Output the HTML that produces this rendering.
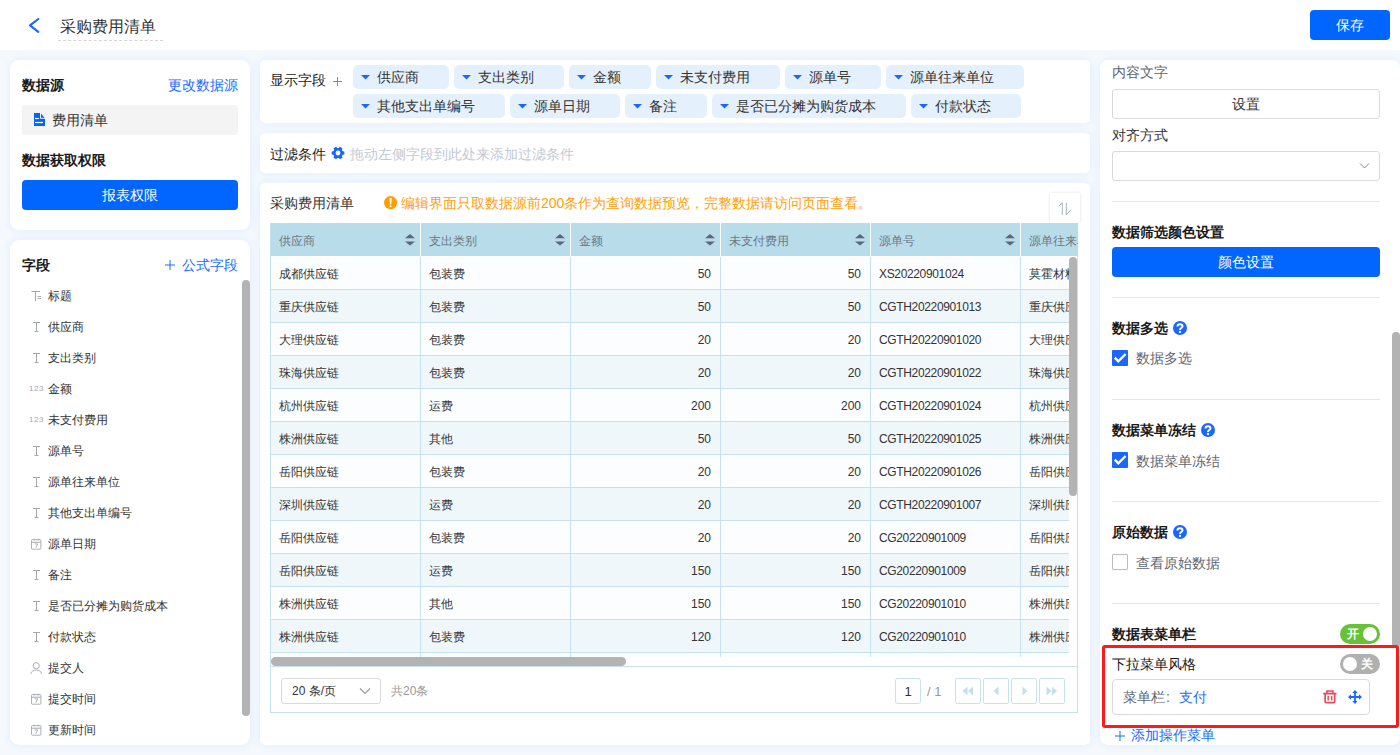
<!DOCTYPE html>
<html><head><meta charset="utf-8">
<style>
html,body{margin:0;padding:0;}
body{width:1400px;height:755px;overflow:hidden;position:relative;background:#f5f9fe;font-family:"Liberation Sans",sans-serif;}
.t{position:absolute;white-space:nowrap;}
.b{position:absolute;box-sizing:border-box;}
.panel{position:absolute;background:#fff;border-radius:10px;box-shadow:0 0 8px 1px #e2eefd;}
svg{position:absolute;overflow:visible;}
</style></head><body>

<div class="b" style="left:0px;top:0px;width:1400px;height:50px;background:#fff;"></div>
<svg style="left:0;top:0" width="60" height="50"><polyline points="38.3,19 30,25.4 38.3,31.8" fill="none" stroke="#1a66ff" stroke-width="2.1" stroke-linecap="round" stroke-linejoin="round"/></svg>
<div class="t" style="left:60px;top:15.5px;font-size:16px;line-height:22px;color:#333;font-weight:normal;">采购费用清单</div>
<div class="b" style="left:58px;top:40px;width:105px;height:1px;border-top:1px dashed #d5d5d5;"></div>
<div class="b" style="left:1310px;top:10px;width:80px;height:30px;background:#0066ff;border-radius:4px;"></div>
<div class="t" style="left:1310px;top:15.0px;font-size:14px;line-height:20px;color:#fff;font-weight:normal;width:80px;text-align:center;">保存</div>
<div class="panel" style="left:10px;top:60px;width:240px;height:170px;border-radius:9px;"></div>
<div class="panel" style="left:10px;top:240px;width:240px;height:505px;border-radius:9px;"></div>
<div class="panel" style="left:260px;top:60px;width:830px;height:63px;border-radius:5px;"></div>
<div class="panel" style="left:260px;top:133px;width:830px;height:40px;border-radius:5px;"></div>
<div class="panel" style="left:260px;top:183px;width:830px;height:562px;border-radius:5px;"></div>
<div class="panel" style="left:1100px;top:60px;width:300px;height:685px;border-radius:8px;"></div>
<div class="t" style="left:22px;top:75.0px;font-size:14px;line-height:20px;color:#1a1a1a;font-weight:bold;">数据源</div>
<div class="t" style="right:1162px;top:75.0px;font-size:14px;line-height:20px;color:#1a6cff;font-weight:normal;">更改数据源</div>
<div class="b" style="left:22px;top:105px;width:216px;height:30px;background:#f4f4f5;border-radius:3px;"></div>
<svg style="left:33px;top:113px" width="13" height="14"><path d="M1 0 H7 V5.8 H12 V13 H1 Z" fill="#0066ff"/><path d="M8 0.6 L11.6 4.8 H8 Z" fill="#0066ff"/><rect x="2" y="4.9" width="3.8" height="1.2" fill="#fff"/><rect x="2" y="8.9" width="8" height="1.2" fill="#fff"/></svg>
<div class="t" style="left:52px;top:110.0px;font-size:14px;line-height:20px;color:#333;font-weight:normal;">费用清单</div>
<div class="t" style="left:22px;top:149.8px;font-size:14px;line-height:20px;color:#1a1a1a;font-weight:bold;">数据获取权限</div>
<div class="b" style="left:22px;top:180px;width:216px;height:30px;background:#0066ff;border-radius:4px;"></div>
<div class="t" style="left:22px;top:185.0px;font-size:14px;line-height:20px;color:#fff;font-weight:normal;width:216px;text-align:center;">报表权限</div>
<div class="t" style="left:22px;top:255.0px;font-size:14px;line-height:20px;color:#1a1a1a;font-weight:bold;">字段</div>
<div class="t" style="right:1162px;top:254.5px;font-size:14px;line-height:20px;color:#1a6cff;font-weight:normal;">公式字段</div>
<svg style="left:165px;top:259.5px" width="10" height="10"><path d="M5 0 V10 M0 5 H10" stroke="#1a6cff" stroke-width="1"/></svg>
<svg style="left:31px;top:289.5px" width="12" height="12"><path d="M0.5 1.5 H9 M4.5 1.5 V11" stroke="#a3a8b0" stroke-width="1" fill="none"/><path d="M6.5 6.5 H10 M6.5 8.5 H10" stroke="#a3a8b0" stroke-width="0.9"/></svg>
<div class="t" style="left:48px;top:286.5px;font-size:12px;line-height:18px;color:#333;font-weight:normal;">标题</div>
<svg style="left:31px;top:320.5px" width="12" height="12"><path d="M2 1.5 H9 M5.5 1.5 V10.5 M3.5 10.5 H7.5" stroke="#a3a8b0" stroke-width="1" fill="none"/></svg>
<div class="t" style="left:48px;top:317.5px;font-size:12px;line-height:18px;color:#333;font-weight:normal;">供应商</div>
<svg style="left:31px;top:351.5px" width="12" height="12"><path d="M2 1.5 H9 M5.5 1.5 V10.5 M3.5 10.5 H7.5" stroke="#a3a8b0" stroke-width="1" fill="none"/></svg>
<div class="t" style="left:48px;top:348.5px;font-size:12px;line-height:18px;color:#333;font-weight:normal;">支出类别</div>
<div class="t" style="left:29px;top:382.5px;font-size:8px;line-height:12px;color:#a3a8b0;letter-spacing:0.6px;">123</div>
<div class="t" style="left:48px;top:379.5px;font-size:12px;line-height:18px;color:#333;font-weight:normal;">金额</div>
<div class="t" style="left:29px;top:413.5px;font-size:8px;line-height:12px;color:#a3a8b0;letter-spacing:0.6px;">123</div>
<div class="t" style="left:48px;top:410.5px;font-size:12px;line-height:18px;color:#333;font-weight:normal;">未支付费用</div>
<svg style="left:31px;top:444.5px" width="12" height="12"><path d="M2 1.5 H9 M5.5 1.5 V10.5 M3.5 10.5 H7.5" stroke="#a3a8b0" stroke-width="1" fill="none"/></svg>
<div class="t" style="left:48px;top:441.5px;font-size:12px;line-height:18px;color:#333;font-weight:normal;">源单号</div>
<svg style="left:31px;top:475.5px" width="12" height="12"><path d="M2 1.5 H9 M5.5 1.5 V10.5 M3.5 10.5 H7.5" stroke="#a3a8b0" stroke-width="1" fill="none"/></svg>
<div class="t" style="left:48px;top:472.5px;font-size:12px;line-height:18px;color:#333;font-weight:normal;">源单往来单位</div>
<svg style="left:31px;top:506.5px" width="12" height="12"><path d="M2 1.5 H9 M5.5 1.5 V10.5 M3.5 10.5 H7.5" stroke="#a3a8b0" stroke-width="1" fill="none"/></svg>
<div class="t" style="left:48px;top:503.5px;font-size:12px;line-height:18px;color:#333;font-weight:normal;">其他支出单编号</div>
<svg style="left:31px;top:537.5px" width="11" height="12"><rect x="0.5" y="1.6" width="9.4" height="9.6" rx="0.8" fill="none" stroke="#a3a8b0" stroke-width="0.9"/><path d="M0.5 4.2 H9.9" stroke="#a3a8b0" stroke-width="1"/><path d="M3.2 0.6 V2.6 M7.2 0.6 V2.6" stroke="#a3a8b0" stroke-width="0.9"/><path d="M3.6 5.9 H6.6 L4.9 9.6" stroke="#a3a8b0" stroke-width="0.9" fill="none"/></svg>
<div class="t" style="left:48px;top:534.5px;font-size:12px;line-height:18px;color:#333;font-weight:normal;">源单日期</div>
<svg style="left:31px;top:568.5px" width="12" height="12"><path d="M2 1.5 H9 M5.5 1.5 V10.5 M3.5 10.5 H7.5" stroke="#a3a8b0" stroke-width="1" fill="none"/></svg>
<div class="t" style="left:48px;top:565.5px;font-size:12px;line-height:18px;color:#333;font-weight:normal;">备注</div>
<svg style="left:31px;top:599.5px" width="12" height="12"><path d="M2 1.5 H9 M5.5 1.5 V10.5 M3.5 10.5 H7.5" stroke="#a3a8b0" stroke-width="1" fill="none"/></svg>
<div class="t" style="left:48px;top:596.5px;font-size:12px;line-height:18px;color:#333;font-weight:normal;">是否已分摊为购货成本</div>
<svg style="left:31px;top:630.5px" width="12" height="12"><path d="M2 1.5 H9 M5.5 1.5 V10.5 M3.5 10.5 H7.5" stroke="#a3a8b0" stroke-width="1" fill="none"/></svg>
<div class="t" style="left:48px;top:627.5px;font-size:12px;line-height:18px;color:#333;font-weight:normal;">付款状态</div>
<svg style="left:30px;top:661.5px" width="12" height="12"><circle cx="6.2" cy="3.7" r="3.1" fill="none" stroke="#a3a8b0" stroke-width="0.95"/><path d="M0.8 11.8 C1.3 6.9 11.1 6.9 11.6 11.8" fill="none" stroke="#a3a8b0" stroke-width="0.95"/></svg>
<div class="t" style="left:48px;top:658.5px;font-size:12px;line-height:18px;color:#333;font-weight:normal;">提交人</div>
<svg style="left:31px;top:692.5px" width="11" height="12"><rect x="0.5" y="1.6" width="9.4" height="9.6" rx="0.8" fill="none" stroke="#a3a8b0" stroke-width="0.9"/><path d="M0.5 4.2 H9.9" stroke="#a3a8b0" stroke-width="1"/><path d="M3.2 0.6 V2.6 M7.2 0.6 V2.6" stroke="#a3a8b0" stroke-width="0.9"/><path d="M3.6 5.9 H6.6 L4.9 9.6" stroke="#a3a8b0" stroke-width="0.9" fill="none"/></svg>
<div class="t" style="left:48px;top:689.5px;font-size:12px;line-height:18px;color:#333;font-weight:normal;">提交时间</div>
<svg style="left:31px;top:723.5px" width="11" height="12"><rect x="0.5" y="1.6" width="9.4" height="9.6" rx="0.8" fill="none" stroke="#a3a8b0" stroke-width="0.9"/><path d="M0.5 4.2 H9.9" stroke="#a3a8b0" stroke-width="1"/><path d="M3.2 0.6 V2.6 M7.2 0.6 V2.6" stroke="#a3a8b0" stroke-width="0.9"/><path d="M3.6 5.9 H6.6 L4.9 9.6" stroke="#a3a8b0" stroke-width="0.9" fill="none"/></svg>
<div class="t" style="left:48px;top:720.5px;font-size:12px;line-height:18px;color:#333;font-weight:normal;">更新时间</div>
<div class="b" style="left:242px;top:280px;width:8px;height:436px;background:#b3b3b3;border-radius:4px;"></div>
<div class="t" style="left:270px;top:69.5px;font-size:14px;line-height:20px;color:#1a1a1a;font-weight:normal;">显示字段</div>
<svg style="left:333px;top:77px" width="9" height="9"><path d="M4.5 0 V9 M0 4.5 H9" stroke="#8a8a8a" stroke-width="1"/></svg>
<div class="b" style="left:353px;top:65px;width:96px;height:24px;background:#e4f1fd;border-radius:5px;"></div>
<svg style="left:361.3px;top:74.8px" width="10" height="5"><path d="M0 0 H9 L4.5 4.6 Z" fill="#1a66ff"/></svg>
<div class="t" style="left:377px;top:67.0px;font-size:14px;line-height:20px;color:#333;font-weight:normal;">供应商</div>
<div class="b" style="left:454px;top:65px;width:110px;height:24px;background:#e4f1fd;border-radius:5px;"></div>
<svg style="left:462.3px;top:74.8px" width="10" height="5"><path d="M0 0 H9 L4.5 4.6 Z" fill="#1a66ff"/></svg>
<div class="t" style="left:478px;top:67.0px;font-size:14px;line-height:20px;color:#333;font-weight:normal;">支出类别</div>
<div class="b" style="left:569px;top:65px;width:82px;height:24px;background:#e4f1fd;border-radius:5px;"></div>
<svg style="left:577.3px;top:74.8px" width="10" height="5"><path d="M0 0 H9 L4.5 4.6 Z" fill="#1a66ff"/></svg>
<div class="t" style="left:593px;top:67.0px;font-size:14px;line-height:20px;color:#333;font-weight:normal;">金额</div>
<div class="b" style="left:656px;top:65px;width:124px;height:24px;background:#e4f1fd;border-radius:5px;"></div>
<svg style="left:664.3px;top:74.8px" width="10" height="5"><path d="M0 0 H9 L4.5 4.6 Z" fill="#1a66ff"/></svg>
<div class="t" style="left:680px;top:67.0px;font-size:14px;line-height:20px;color:#333;font-weight:normal;">未支付费用</div>
<div class="b" style="left:785px;top:65px;width:96px;height:24px;background:#e4f1fd;border-radius:5px;"></div>
<svg style="left:793.3px;top:74.8px" width="10" height="5"><path d="M0 0 H9 L4.5 4.6 Z" fill="#1a66ff"/></svg>
<div class="t" style="left:809px;top:67.0px;font-size:14px;line-height:20px;color:#333;font-weight:normal;">源单号</div>
<div class="b" style="left:886px;top:65px;width:138px;height:24px;background:#e4f1fd;border-radius:5px;"></div>
<svg style="left:894.3px;top:74.8px" width="10" height="5"><path d="M0 0 H9 L4.5 4.6 Z" fill="#1a66ff"/></svg>
<div class="t" style="left:910px;top:67.0px;font-size:14px;line-height:20px;color:#333;font-weight:normal;">源单往来单位</div>
<div class="b" style="left:353px;top:94px;width:152px;height:24px;background:#e4f1fd;border-radius:5px;"></div>
<svg style="left:361.3px;top:103.8px" width="10" height="5"><path d="M0 0 H9 L4.5 4.6 Z" fill="#1a66ff"/></svg>
<div class="t" style="left:377px;top:96.0px;font-size:14px;line-height:20px;color:#333;font-weight:normal;">其他支出单编号</div>
<div class="b" style="left:510px;top:94px;width:110px;height:24px;background:#e4f1fd;border-radius:5px;"></div>
<svg style="left:518.3px;top:103.8px" width="10" height="5"><path d="M0 0 H9 L4.5 4.6 Z" fill="#1a66ff"/></svg>
<div class="t" style="left:534px;top:96.0px;font-size:14px;line-height:20px;color:#333;font-weight:normal;">源单日期</div>
<div class="b" style="left:625px;top:94px;width:82px;height:24px;background:#e4f1fd;border-radius:5px;"></div>
<svg style="left:633.3px;top:103.8px" width="10" height="5"><path d="M0 0 H9 L4.5 4.6 Z" fill="#1a66ff"/></svg>
<div class="t" style="left:649px;top:96.0px;font-size:14px;line-height:20px;color:#333;font-weight:normal;">备注</div>
<div class="b" style="left:712px;top:94px;width:194px;height:24px;background:#e4f1fd;border-radius:5px;"></div>
<svg style="left:720.3px;top:103.8px" width="10" height="5"><path d="M0 0 H9 L4.5 4.6 Z" fill="#1a66ff"/></svg>
<div class="t" style="left:736px;top:96.0px;font-size:14px;line-height:20px;color:#333;font-weight:normal;">是否已分摊为购货成本</div>
<div class="b" style="left:911px;top:94px;width:110px;height:24px;background:#e4f1fd;border-radius:5px;"></div>
<svg style="left:919.3px;top:103.8px" width="10" height="5"><path d="M0 0 H9 L4.5 4.6 Z" fill="#1a66ff"/></svg>
<div class="t" style="left:935px;top:96.0px;font-size:14px;line-height:20px;color:#333;font-weight:normal;">付款状态</div>
<div class="t" style="left:270px;top:143.5px;font-size:14px;line-height:20px;color:#1a1a1a;font-weight:normal;">过滤条件</div>
<svg style="left:330.5px;top:146px" width="14" height="14"><polygon points="11.64,5.13 13.33,5.54 13.33,8.46 11.64,8.87 10.94,10.08 11.43,11.75 8.90,13.22 7.70,11.95 6.30,11.95 5.10,13.22 2.57,11.75 3.06,10.08 2.36,8.87 0.67,8.46 0.67,5.54 2.36,5.13 3.06,3.92 2.57,2.25 5.10,0.78 6.30,2.05 7.70,2.05 8.90,0.78 11.43,2.25 10.94,3.92" fill="#1a66ff"/><circle cx="7" cy="7" r="2.4" fill="#fff"/></svg>
<div class="t" style="left:350px;top:143.5px;font-size:14px;line-height:20px;color:#c3c9d4;font-weight:normal;">拖动左侧字段到此处来添加过滤条件</div>
<div class="t" style="left:270px;top:193.0px;font-size:14px;line-height:20px;color:#333;font-weight:normal;">采购费用清单</div>
<svg style="left:384px;top:196px" width="13" height="13"><circle cx="6.6" cy="6.6" r="6.6" fill="#ffa000"/><path d="M5.4 2 H7.8 L7.25 8.6 H5.95 Z" fill="#fff"/><rect x="5.8" y="9.4" width="1.6" height="1.7" fill="#fff"/></svg>
<div class="t" style="left:401px;top:193.0px;font-size:14px;line-height:20px;color:#ffa00a;font-weight:normal;">编辑界面只取数据源前200条作为查询数据预览，完整数据请访问页面查看。</div>
<div class="b" style="left:1050px;top:193px;width:30px;height:30px;background:#fff;box-shadow:0 0 3px rgba(0,0,0,0.12);"></div>
<svg style="left:1058px;top:201.5px" width="14" height="14"><path d="M0.8 4.2 L4.3 0.8 V13" stroke="#aab2bd" stroke-width="1" fill="none"/><path d="M8.3 0.8 V13 L12.8 7.8" stroke="#aab2bd" stroke-width="1" fill="none"/></svg>
<div class="b" style="left:270px;top:223px;width:808px;height:490px;border:1px solid #c6e2ef;"></div>
<div class="b" style="left:271px;top:223px;width:807px;height:33px;background:#b8dcea;"></div>
<div style="position:absolute;left:270px;top:223px;width:808px;height:33px;overflow:hidden;">
<div class="t" style="left:9px;top:8.5px;font-size:12px;line-height:18px;color:#6b7886;">供应商</div>
<svg style="left:135px;top:10.5px" width="10" height="12"><path d="M0 4.3 L5 0 L10 4.3 Z M0 7.4 L5 11.6 L10 7.4 Z" fill="#5b6678"/></svg>
<div class="b" style="left:150px;top:0;width:1px;height:33px;background:#fff;"></div>
<div class="t" style="left:159px;top:8.5px;font-size:12px;line-height:18px;color:#6b7886;">支出类别</div>
<svg style="left:285px;top:10.5px" width="10" height="12"><path d="M0 4.3 L5 0 L10 4.3 Z M0 7.4 L5 11.6 L10 7.4 Z" fill="#5b6678"/></svg>
<div class="b" style="left:300px;top:0;width:1px;height:33px;background:#fff;"></div>
<div class="t" style="left:309px;top:8.5px;font-size:12px;line-height:18px;color:#6b7886;">金额</div>
<svg style="left:435px;top:10.5px" width="10" height="12"><path d="M0 4.3 L5 0 L10 4.3 Z M0 7.4 L5 11.6 L10 7.4 Z" fill="#5b6678"/></svg>
<div class="b" style="left:450px;top:0;width:1px;height:33px;background:#fff;"></div>
<div class="t" style="left:459px;top:8.5px;font-size:12px;line-height:18px;color:#6b7886;">未支付费用</div>
<svg style="left:585px;top:10.5px" width="10" height="12"><path d="M0 4.3 L5 0 L10 4.3 Z M0 7.4 L5 11.6 L10 7.4 Z" fill="#5b6678"/></svg>
<div class="b" style="left:600px;top:0;width:1px;height:33px;background:#fff;"></div>
<div class="t" style="left:609px;top:8.5px;font-size:12px;line-height:18px;color:#6b7886;">源单号</div>
<svg style="left:735px;top:10.5px" width="10" height="12"><path d="M0 4.3 L5 0 L10 4.3 Z M0 7.4 L5 11.6 L10 7.4 Z" fill="#5b6678"/></svg>
<div class="b" style="left:750px;top:0;width:1px;height:33px;background:#fff;"></div>
<div class="t" style="left:759px;top:8.5px;font-size:12px;line-height:18px;color:#6b7886;">源单往来单位</div>
</div>
<div style="position:absolute;left:271px;top:257px;width:798px;height:400px;overflow:hidden;">
<div class="b" style="left:0;top:0px;width:808px;height:33px;background:#fbfdfe;border-bottom:1px solid #c6e2ef;"></div>
<div class="t" style="left:8px;top:8px;font-size:12px;line-height:18px;color:#333;">成都供应链</div>
<div class="b" style="left:149px;top:0px;width:1px;height:33px;background:#c6e2ef;"></div>
<div class="t" style="left:158px;top:8px;font-size:12px;line-height:18px;color:#333;">包装费</div>
<div class="b" style="left:299px;top:0px;width:1px;height:33px;background:#c6e2ef;"></div>
<div class="t" style="left:299px;width:141px;text-align:right;top:8px;font-size:12px;line-height:18px;color:#333;">50</div>
<div class="b" style="left:449px;top:0px;width:1px;height:33px;background:#c6e2ef;"></div>
<div class="t" style="left:449px;width:141px;text-align:right;top:8px;font-size:12px;line-height:18px;color:#333;">50</div>
<div class="b" style="left:599px;top:0px;width:1px;height:33px;background:#c6e2ef;"></div>
<div class="t" style="left:608px;top:8px;font-size:12px;line-height:18px;color:#333;letter-spacing:-0.35px;">XS20220901024</div>
<div class="b" style="left:749px;top:0px;width:1px;height:33px;background:#c6e2ef;"></div>
<div class="t" style="left:758px;top:8px;font-size:12px;line-height:18px;color:#333;">莫霍材料</div>
<div class="b" style="left:0;top:33px;width:808px;height:33px;background:#f0f7fb;border-bottom:1px solid #c6e2ef;"></div>
<div class="t" style="left:8px;top:41px;font-size:12px;line-height:18px;color:#333;">重庆供应链</div>
<div class="b" style="left:149px;top:33px;width:1px;height:33px;background:#c6e2ef;"></div>
<div class="t" style="left:158px;top:41px;font-size:12px;line-height:18px;color:#333;">包装费</div>
<div class="b" style="left:299px;top:33px;width:1px;height:33px;background:#c6e2ef;"></div>
<div class="t" style="left:299px;width:141px;text-align:right;top:41px;font-size:12px;line-height:18px;color:#333;">50</div>
<div class="b" style="left:449px;top:33px;width:1px;height:33px;background:#c6e2ef;"></div>
<div class="t" style="left:449px;width:141px;text-align:right;top:41px;font-size:12px;line-height:18px;color:#333;">50</div>
<div class="b" style="left:599px;top:33px;width:1px;height:33px;background:#c6e2ef;"></div>
<div class="t" style="left:608px;top:41px;font-size:12px;line-height:18px;color:#333;letter-spacing:-0.35px;">CGTH20220901013</div>
<div class="b" style="left:749px;top:33px;width:1px;height:33px;background:#c6e2ef;"></div>
<div class="t" style="left:758px;top:41px;font-size:12px;line-height:18px;color:#333;">重庆供应链</div>
<div class="b" style="left:0;top:66px;width:808px;height:33px;background:#fbfdfe;border-bottom:1px solid #c6e2ef;"></div>
<div class="t" style="left:8px;top:74px;font-size:12px;line-height:18px;color:#333;">大理供应链</div>
<div class="b" style="left:149px;top:66px;width:1px;height:33px;background:#c6e2ef;"></div>
<div class="t" style="left:158px;top:74px;font-size:12px;line-height:18px;color:#333;">包装费</div>
<div class="b" style="left:299px;top:66px;width:1px;height:33px;background:#c6e2ef;"></div>
<div class="t" style="left:299px;width:141px;text-align:right;top:74px;font-size:12px;line-height:18px;color:#333;">20</div>
<div class="b" style="left:449px;top:66px;width:1px;height:33px;background:#c6e2ef;"></div>
<div class="t" style="left:449px;width:141px;text-align:right;top:74px;font-size:12px;line-height:18px;color:#333;">20</div>
<div class="b" style="left:599px;top:66px;width:1px;height:33px;background:#c6e2ef;"></div>
<div class="t" style="left:608px;top:74px;font-size:12px;line-height:18px;color:#333;letter-spacing:-0.35px;">CGTH20220901020</div>
<div class="b" style="left:749px;top:66px;width:1px;height:33px;background:#c6e2ef;"></div>
<div class="t" style="left:758px;top:74px;font-size:12px;line-height:18px;color:#333;">大理供应链</div>
<div class="b" style="left:0;top:99px;width:808px;height:33px;background:#f0f7fb;border-bottom:1px solid #c6e2ef;"></div>
<div class="t" style="left:8px;top:107px;font-size:12px;line-height:18px;color:#333;">珠海供应链</div>
<div class="b" style="left:149px;top:99px;width:1px;height:33px;background:#c6e2ef;"></div>
<div class="t" style="left:158px;top:107px;font-size:12px;line-height:18px;color:#333;">包装费</div>
<div class="b" style="left:299px;top:99px;width:1px;height:33px;background:#c6e2ef;"></div>
<div class="t" style="left:299px;width:141px;text-align:right;top:107px;font-size:12px;line-height:18px;color:#333;">20</div>
<div class="b" style="left:449px;top:99px;width:1px;height:33px;background:#c6e2ef;"></div>
<div class="t" style="left:449px;width:141px;text-align:right;top:107px;font-size:12px;line-height:18px;color:#333;">20</div>
<div class="b" style="left:599px;top:99px;width:1px;height:33px;background:#c6e2ef;"></div>
<div class="t" style="left:608px;top:107px;font-size:12px;line-height:18px;color:#333;letter-spacing:-0.35px;">CGTH20220901022</div>
<div class="b" style="left:749px;top:99px;width:1px;height:33px;background:#c6e2ef;"></div>
<div class="t" style="left:758px;top:107px;font-size:12px;line-height:18px;color:#333;">珠海供应链</div>
<div class="b" style="left:0;top:132px;width:808px;height:33px;background:#fbfdfe;border-bottom:1px solid #c6e2ef;"></div>
<div class="t" style="left:8px;top:140px;font-size:12px;line-height:18px;color:#333;">杭州供应链</div>
<div class="b" style="left:149px;top:132px;width:1px;height:33px;background:#c6e2ef;"></div>
<div class="t" style="left:158px;top:140px;font-size:12px;line-height:18px;color:#333;">运费</div>
<div class="b" style="left:299px;top:132px;width:1px;height:33px;background:#c6e2ef;"></div>
<div class="t" style="left:299px;width:141px;text-align:right;top:140px;font-size:12px;line-height:18px;color:#333;">200</div>
<div class="b" style="left:449px;top:132px;width:1px;height:33px;background:#c6e2ef;"></div>
<div class="t" style="left:449px;width:141px;text-align:right;top:140px;font-size:12px;line-height:18px;color:#333;">200</div>
<div class="b" style="left:599px;top:132px;width:1px;height:33px;background:#c6e2ef;"></div>
<div class="t" style="left:608px;top:140px;font-size:12px;line-height:18px;color:#333;letter-spacing:-0.35px;">CGTH20220901024</div>
<div class="b" style="left:749px;top:132px;width:1px;height:33px;background:#c6e2ef;"></div>
<div class="t" style="left:758px;top:140px;font-size:12px;line-height:18px;color:#333;">杭州供应链</div>
<div class="b" style="left:0;top:165px;width:808px;height:33px;background:#f0f7fb;border-bottom:1px solid #c6e2ef;"></div>
<div class="t" style="left:8px;top:173px;font-size:12px;line-height:18px;color:#333;">株洲供应链</div>
<div class="b" style="left:149px;top:165px;width:1px;height:33px;background:#c6e2ef;"></div>
<div class="t" style="left:158px;top:173px;font-size:12px;line-height:18px;color:#333;">其他</div>
<div class="b" style="left:299px;top:165px;width:1px;height:33px;background:#c6e2ef;"></div>
<div class="t" style="left:299px;width:141px;text-align:right;top:173px;font-size:12px;line-height:18px;color:#333;">50</div>
<div class="b" style="left:449px;top:165px;width:1px;height:33px;background:#c6e2ef;"></div>
<div class="t" style="left:449px;width:141px;text-align:right;top:173px;font-size:12px;line-height:18px;color:#333;">50</div>
<div class="b" style="left:599px;top:165px;width:1px;height:33px;background:#c6e2ef;"></div>
<div class="t" style="left:608px;top:173px;font-size:12px;line-height:18px;color:#333;letter-spacing:-0.35px;">CGTH20220901025</div>
<div class="b" style="left:749px;top:165px;width:1px;height:33px;background:#c6e2ef;"></div>
<div class="t" style="left:758px;top:173px;font-size:12px;line-height:18px;color:#333;">株洲供应链</div>
<div class="b" style="left:0;top:198px;width:808px;height:33px;background:#fbfdfe;border-bottom:1px solid #c6e2ef;"></div>
<div class="t" style="left:8px;top:206px;font-size:12px;line-height:18px;color:#333;">岳阳供应链</div>
<div class="b" style="left:149px;top:198px;width:1px;height:33px;background:#c6e2ef;"></div>
<div class="t" style="left:158px;top:206px;font-size:12px;line-height:18px;color:#333;">包装费</div>
<div class="b" style="left:299px;top:198px;width:1px;height:33px;background:#c6e2ef;"></div>
<div class="t" style="left:299px;width:141px;text-align:right;top:206px;font-size:12px;line-height:18px;color:#333;">20</div>
<div class="b" style="left:449px;top:198px;width:1px;height:33px;background:#c6e2ef;"></div>
<div class="t" style="left:449px;width:141px;text-align:right;top:206px;font-size:12px;line-height:18px;color:#333;">20</div>
<div class="b" style="left:599px;top:198px;width:1px;height:33px;background:#c6e2ef;"></div>
<div class="t" style="left:608px;top:206px;font-size:12px;line-height:18px;color:#333;letter-spacing:-0.35px;">CGTH20220901026</div>
<div class="b" style="left:749px;top:198px;width:1px;height:33px;background:#c6e2ef;"></div>
<div class="t" style="left:758px;top:206px;font-size:12px;line-height:18px;color:#333;">岳阳供应链</div>
<div class="b" style="left:0;top:231px;width:808px;height:33px;background:#f0f7fb;border-bottom:1px solid #c6e2ef;"></div>
<div class="t" style="left:8px;top:239px;font-size:12px;line-height:18px;color:#333;">深圳供应链</div>
<div class="b" style="left:149px;top:231px;width:1px;height:33px;background:#c6e2ef;"></div>
<div class="t" style="left:158px;top:239px;font-size:12px;line-height:18px;color:#333;">运费</div>
<div class="b" style="left:299px;top:231px;width:1px;height:33px;background:#c6e2ef;"></div>
<div class="t" style="left:299px;width:141px;text-align:right;top:239px;font-size:12px;line-height:18px;color:#333;">20</div>
<div class="b" style="left:449px;top:231px;width:1px;height:33px;background:#c6e2ef;"></div>
<div class="t" style="left:449px;width:141px;text-align:right;top:239px;font-size:12px;line-height:18px;color:#333;">20</div>
<div class="b" style="left:599px;top:231px;width:1px;height:33px;background:#c6e2ef;"></div>
<div class="t" style="left:608px;top:239px;font-size:12px;line-height:18px;color:#333;letter-spacing:-0.35px;">CGTH20220901007</div>
<div class="b" style="left:749px;top:231px;width:1px;height:33px;background:#c6e2ef;"></div>
<div class="t" style="left:758px;top:239px;font-size:12px;line-height:18px;color:#333;">深圳供应链</div>
<div class="b" style="left:0;top:264px;width:808px;height:33px;background:#fbfdfe;border-bottom:1px solid #c6e2ef;"></div>
<div class="t" style="left:8px;top:272px;font-size:12px;line-height:18px;color:#333;">岳阳供应链</div>
<div class="b" style="left:149px;top:264px;width:1px;height:33px;background:#c6e2ef;"></div>
<div class="t" style="left:158px;top:272px;font-size:12px;line-height:18px;color:#333;">包装费</div>
<div class="b" style="left:299px;top:264px;width:1px;height:33px;background:#c6e2ef;"></div>
<div class="t" style="left:299px;width:141px;text-align:right;top:272px;font-size:12px;line-height:18px;color:#333;">20</div>
<div class="b" style="left:449px;top:264px;width:1px;height:33px;background:#c6e2ef;"></div>
<div class="t" style="left:449px;width:141px;text-align:right;top:272px;font-size:12px;line-height:18px;color:#333;">20</div>
<div class="b" style="left:599px;top:264px;width:1px;height:33px;background:#c6e2ef;"></div>
<div class="t" style="left:608px;top:272px;font-size:12px;line-height:18px;color:#333;letter-spacing:-0.35px;">CG20220901009</div>
<div class="b" style="left:749px;top:264px;width:1px;height:33px;background:#c6e2ef;"></div>
<div class="t" style="left:758px;top:272px;font-size:12px;line-height:18px;color:#333;">岳阳供应链</div>
<div class="b" style="left:0;top:297px;width:808px;height:33px;background:#f0f7fb;border-bottom:1px solid #c6e2ef;"></div>
<div class="t" style="left:8px;top:305px;font-size:12px;line-height:18px;color:#333;">岳阳供应链</div>
<div class="b" style="left:149px;top:297px;width:1px;height:33px;background:#c6e2ef;"></div>
<div class="t" style="left:158px;top:305px;font-size:12px;line-height:18px;color:#333;">运费</div>
<div class="b" style="left:299px;top:297px;width:1px;height:33px;background:#c6e2ef;"></div>
<div class="t" style="left:299px;width:141px;text-align:right;top:305px;font-size:12px;line-height:18px;color:#333;">150</div>
<div class="b" style="left:449px;top:297px;width:1px;height:33px;background:#c6e2ef;"></div>
<div class="t" style="left:449px;width:141px;text-align:right;top:305px;font-size:12px;line-height:18px;color:#333;">150</div>
<div class="b" style="left:599px;top:297px;width:1px;height:33px;background:#c6e2ef;"></div>
<div class="t" style="left:608px;top:305px;font-size:12px;line-height:18px;color:#333;letter-spacing:-0.35px;">CG20220901009</div>
<div class="b" style="left:749px;top:297px;width:1px;height:33px;background:#c6e2ef;"></div>
<div class="t" style="left:758px;top:305px;font-size:12px;line-height:18px;color:#333;">岳阳供应链</div>
<div class="b" style="left:0;top:330px;width:808px;height:33px;background:#fbfdfe;border-bottom:1px solid #c6e2ef;"></div>
<div class="t" style="left:8px;top:338px;font-size:12px;line-height:18px;color:#333;">株洲供应链</div>
<div class="b" style="left:149px;top:330px;width:1px;height:33px;background:#c6e2ef;"></div>
<div class="t" style="left:158px;top:338px;font-size:12px;line-height:18px;color:#333;">其他</div>
<div class="b" style="left:299px;top:330px;width:1px;height:33px;background:#c6e2ef;"></div>
<div class="t" style="left:299px;width:141px;text-align:right;top:338px;font-size:12px;line-height:18px;color:#333;">150</div>
<div class="b" style="left:449px;top:330px;width:1px;height:33px;background:#c6e2ef;"></div>
<div class="t" style="left:449px;width:141px;text-align:right;top:338px;font-size:12px;line-height:18px;color:#333;">150</div>
<div class="b" style="left:599px;top:330px;width:1px;height:33px;background:#c6e2ef;"></div>
<div class="t" style="left:608px;top:338px;font-size:12px;line-height:18px;color:#333;letter-spacing:-0.35px;">CG20220901010</div>
<div class="b" style="left:749px;top:330px;width:1px;height:33px;background:#c6e2ef;"></div>
<div class="t" style="left:758px;top:338px;font-size:12px;line-height:18px;color:#333;">株洲供应链</div>
<div class="b" style="left:0;top:363px;width:808px;height:33px;background:#f0f7fb;border-bottom:1px solid #c6e2ef;"></div>
<div class="t" style="left:8px;top:371px;font-size:12px;line-height:18px;color:#333;">株洲供应链</div>
<div class="b" style="left:149px;top:363px;width:1px;height:33px;background:#c6e2ef;"></div>
<div class="t" style="left:158px;top:371px;font-size:12px;line-height:18px;color:#333;">包装费</div>
<div class="b" style="left:299px;top:363px;width:1px;height:33px;background:#c6e2ef;"></div>
<div class="t" style="left:299px;width:141px;text-align:right;top:371px;font-size:12px;line-height:18px;color:#333;">120</div>
<div class="b" style="left:449px;top:363px;width:1px;height:33px;background:#c6e2ef;"></div>
<div class="t" style="left:449px;width:141px;text-align:right;top:371px;font-size:12px;line-height:18px;color:#333;">120</div>
<div class="b" style="left:599px;top:363px;width:1px;height:33px;background:#c6e2ef;"></div>
<div class="t" style="left:608px;top:371px;font-size:12px;line-height:18px;color:#333;letter-spacing:-0.35px;">CG20220901010</div>
<div class="b" style="left:749px;top:363px;width:1px;height:33px;background:#c6e2ef;"></div>
<div class="t" style="left:758px;top:371px;font-size:12px;line-height:18px;color:#333;">株洲供应链</div>
<div class="b" style="left:0;top:396px;width:808px;height:33px;background:#fbfdfe;border-bottom:1px solid #c6e2ef;"></div>
<div class="t" style="left:8px;top:404px;font-size:12px;line-height:18px;color:#333;">株洲供应链</div>
<div class="b" style="left:149px;top:396px;width:1px;height:33px;background:#c6e2ef;"></div>
<div class="t" style="left:158px;top:404px;font-size:12px;line-height:18px;color:#333;">包装费</div>
<div class="b" style="left:299px;top:396px;width:1px;height:33px;background:#c6e2ef;"></div>
<div class="t" style="left:299px;width:141px;text-align:right;top:404px;font-size:12px;line-height:18px;color:#333;">120</div>
<div class="b" style="left:449px;top:396px;width:1px;height:33px;background:#c6e2ef;"></div>
<div class="t" style="left:449px;width:141px;text-align:right;top:404px;font-size:12px;line-height:18px;color:#333;">120</div>
<div class="b" style="left:599px;top:396px;width:1px;height:33px;background:#c6e2ef;"></div>
<div class="t" style="left:608px;top:404px;font-size:12px;line-height:18px;color:#333;letter-spacing:-0.35px;">CG20220901010</div>
<div class="b" style="left:749px;top:396px;width:1px;height:33px;background:#c6e2ef;"></div>
<div class="t" style="left:758px;top:404px;font-size:12px;line-height:18px;color:#333;">株洲供应链</div>
</div>
<div class="b" style="left:1069px;top:257px;width:8px;height:239px;background:#b3b3b3;border-radius:4px;"></div>
<div class="b" style="left:271px;top:657px;width:355px;height:9px;background:#b3b3b3;border-radius:4.5px;"></div>
<div class="b" style="left:270px;top:666px;width:808px;height:1px;background:#c6e2ef;"></div>
<div class="b" style="left:281px;top:678px;width:100px;height:26px;border:1px solid #dadada;border-radius:3px;background:#fff;"></div>
<div class="t" style="left:292px;top:682.0px;font-size:12px;line-height:18px;color:#333;font-weight:normal;">20 条/页</div>
<svg style="left:359px;top:687px" width="12" height="8"><polyline points="1,1.5 6,6.5 11,1.5" fill="none" stroke="#999" stroke-width="1.1"/></svg>
<div class="t" style="left:391px;top:682.0px;font-size:12px;line-height:18px;color:#999;font-weight:normal;">共20条</div>
<div class="b" style="left:895px;top:678px;width:26px;height:26px;border:1px solid #c6e2ef;border-radius:3px;"></div>
<div class="t" style="left:895px;top:681.5px;font-size:13px;line-height:19px;color:#333;font-weight:normal;width:26px;text-align:center;">1</div>
<div class="t" style="left:927px;top:681.5px;font-size:13px;line-height:19px;color:#999;font-weight:normal;">/ 1</div>
<div class="b" style="left:955px;top:678px;width:26px;height:26px;border:1px solid #c6e2ef;border-radius:2px;"></div>
<svg style="left:962px;top:686px" width="12" height="10"><path d="M5.5 0.5 L0.5 5 L5.5 9.5 Z M11 0.5 L6 5 L11 9.5 Z" fill="#c3dfee"/></svg>
<div class="b" style="left:983px;top:678px;width:26px;height:26px;border:1px solid #c6e2ef;border-radius:2px;"></div>
<svg style="left:993px;top:686px" width="6" height="10"><path d="M5.5 0.5 L0.5 5 L5.5 9.5 Z" fill="#c3dfee"/></svg>
<div class="b" style="left:1011px;top:678px;width:26px;height:26px;border:1px solid #c6e2ef;border-radius:2px;"></div>
<svg style="left:1022px;top:686px" width="6" height="10"><path d="M0.5 0.5 L5.5 5 L0.5 9.5 Z" fill="#c3dfee"/></svg>
<div class="b" style="left:1039px;top:678px;width:26px;height:26px;border:1px solid #c6e2ef;border-radius:2px;"></div>
<svg style="left:1046px;top:686px" width="12" height="10"><path d="M0.5 0.5 L5.5 5 L0.5 9.5 Z M6 0.5 L11 5 L6 9.5 Z" fill="#c3dfee"/></svg>
<div class="t" style="left:1112px;top:61.7px;font-size:14px;line-height:20px;color:#5f6772;font-weight:normal;">内容文字</div>
<div class="b" style="left:1112px;top:89px;width:268px;height:30px;border:1px solid #dadada;border-radius:3px;"></div>
<div class="t" style="left:1112px;top:94.0px;font-size:14px;line-height:20px;color:#333;font-weight:normal;width:268px;text-align:center;">设置</div>
<div class="t" style="left:1112px;top:124.5px;font-size:14px;line-height:20px;color:#333;font-weight:normal;">对齐方式</div>
<div class="b" style="left:1112px;top:151px;width:268px;height:30px;border:1px solid #dadada;border-radius:3px;"></div>
<svg style="left:1359px;top:162px" width="12" height="8"><polyline points="1,1.5 5.5,6 10,1.5" fill="none" stroke="#7d838c" stroke-width="1"/></svg>
<div class="b" style="left:1112px;top:201px;width:268px;height:1px;background:#e6e6e6;"></div>
<div class="b" style="left:1112px;top:297px;width:268px;height:1px;background:#e6e6e6;"></div>
<div class="b" style="left:1112px;top:399px;width:268px;height:1px;background:#e6e6e6;"></div>
<div class="b" style="left:1112px;top:501px;width:268px;height:1px;background:#e6e6e6;"></div>
<div class="b" style="left:1112px;top:603px;width:268px;height:1px;background:#e6e6e6;"></div>
<div class="t" style="left:1112px;top:222.0px;font-size:14px;line-height:20px;color:#1a1a1a;font-weight:bold;">数据筛选颜色设置</div>
<div class="b" style="left:1112px;top:247px;width:268px;height:30px;background:#0066ff;border-radius:4px;"></div>
<div class="t" style="left:1112px;top:252.0px;font-size:14px;line-height:20px;color:#fff;font-weight:normal;width:268px;text-align:center;">颜色设置</div>
<div class="t" style="left:1112px;top:317.8px;font-size:14px;line-height:20px;color:#1a1a1a;font-weight:bold;">数据多选</div>
<svg style="left:1173px;top:320.8px" width="14" height="14"><circle cx="7" cy="7" r="7" fill="#1a66ff"/><path d="M4.5 5.4 C4.5 2.5 9.5 2.5 9.5 5.2 C9.5 7 7 7 7 8.9" fill="none" stroke="#fff" stroke-width="2"/><circle cx="7" cy="11" r="1.15" fill="#fff"/></svg>
<svg style="left:1112px;top:350px" width="16" height="16"><rect x="0" y="0" width="16" height="16" rx="1" fill="#1a66ff"/><polyline points="2.8,7.6 6.3,11.4 13.6,4" fill="none" stroke="#fff" stroke-width="2.3"/></svg>
<div class="t" style="left:1136px;top:348.4px;font-size:14px;line-height:20px;color:#5f6772;font-weight:normal;">数据多选</div>
<div class="t" style="left:1112px;top:420.0px;font-size:14px;line-height:20px;color:#1a1a1a;font-weight:bold;">数据菜单冻结</div>
<svg style="left:1201px;top:422.5px" width="14" height="14"><circle cx="7" cy="7" r="7" fill="#1a66ff"/><path d="M4.5 5.4 C4.5 2.5 9.5 2.5 9.5 5.2 C9.5 7 7 7 7 8.9" fill="none" stroke="#fff" stroke-width="2"/><circle cx="7" cy="11" r="1.15" fill="#fff"/></svg>
<svg style="left:1112px;top:452px" width="16" height="16"><rect x="0" y="0" width="16" height="16" rx="1" fill="#1a66ff"/><polyline points="2.8,7.6 6.3,11.4 13.6,4" fill="none" stroke="#fff" stroke-width="2.3"/></svg>
<div class="t" style="left:1136px;top:450.8px;font-size:14px;line-height:20px;color:#5f6772;font-weight:normal;">数据菜单冻结</div>
<div class="t" style="left:1112px;top:522.0px;font-size:14px;line-height:20px;color:#1a1a1a;font-weight:bold;">原始数据</div>
<svg style="left:1173px;top:524.5px" width="14" height="14"><circle cx="7" cy="7" r="7" fill="#1a66ff"/><path d="M4.5 5.4 C4.5 2.5 9.5 2.5 9.5 5.2 C9.5 7 7 7 7 8.9" fill="none" stroke="#fff" stroke-width="2"/><circle cx="7" cy="11" r="1.15" fill="#fff"/></svg>
<div class="b" style="left:1112px;top:554px;width:16px;height:16px;border:1px solid #b9bcc5;border-radius:1px;background:#fff;"></div>
<div class="t" style="left:1136px;top:553.0px;font-size:14px;line-height:20px;color:#5f6772;font-weight:normal;">查看原始数据</div>
<div class="t" style="left:1112px;top:624.0px;font-size:14px;line-height:20px;color:#1a1a1a;font-weight:bold;">数据表菜单栏</div>
<div class="b" style="left:1340px;top:624px;width:40px;height:20px;background:#67c23a;border-radius:10px;"></div>
<div class="b" style="left:1363px;top:627px;width:14px;height:14px;border-radius:50%;background:#fff;"></div>
<div class="t" style="left:1346.5px;top:625.0px;font-size:12px;line-height:18px;color:#fff;font-weight:bold;">开</div>
<div class="t" style="left:1112px;top:654.0px;font-size:14px;line-height:20px;color:#1a1a1a;font-weight:normal;">下拉菜单风格</div>
<div class="b" style="left:1340px;top:654px;width:40px;height:20px;background:#b0b0b0;border-radius:10px;"></div>
<div class="b" style="left:1343px;top:657px;width:14px;height:14px;border-radius:50%;background:#fff;"></div>
<div class="t" style="left:1361px;top:655.0px;font-size:12px;line-height:18px;color:#fff;font-weight:bold;">关</div>
<div class="b" style="left:1112px;top:679px;width:258px;height:36px;border:1px solid #dadada;border-radius:4px;"></div>
<div class="t" style="left:1123px;top:687.0px;font-size:14px;line-height:20px;color:#5f6772;font-weight:normal;">菜单栏</div>
<div class="t" style="left:1166px;top:687.0px;font-size:14px;line-height:20px;color:#5f6772;font-weight:normal;">:</div>
<div class="t" style="left:1179px;top:687.0px;font-size:14px;line-height:20px;color:#1a6cff;font-weight:normal;">支付</div>
<svg style="left:1323px;top:690px" width="14" height="14"><path d="M0.3 3.6 H13.5" stroke="#e64a5f" stroke-width="1.8"/><path d="M3.9 3.6 V1 H9.9 V3.6" fill="none" stroke="#e64a5f" stroke-width="1.6"/><path d="M2.1 4 V11.6 Q2.1 12.7 3.2 12.7 H10.6 Q11.7 12.7 11.7 11.6 V4" fill="none" stroke="#e64a5f" stroke-width="1.7"/><path d="M5.2 6 V10.5 M8.6 6 V10.5" stroke="#e64a5f" stroke-width="1.5"/></svg>
<svg style="left:1348px;top:690px" width="14" height="14"><path d="M7 1 V13 M1 7 H13" stroke="#1a66ff" stroke-width="1.8"/><path d="M7 0 L4.3 3 H9.7 Z M7 14 L4.3 11 H9.7 Z M0 7 L3 4.3 V9.7 Z M14 7 L11 4.3 V9.7 Z" fill="#1a66ff"/></svg>
<div class="t" style="left:1131px;top:725.0px;font-size:14px;line-height:20px;color:#1a6cff;font-weight:normal;">添加操作菜单</div>
<svg style="left:1115px;top:730.5px" width="10" height="10"><path d="M5 0 V10 M0 5 H10" stroke="#1a6cff" stroke-width="1"/></svg>
<div class="b" style="left:1392px;top:332px;width:8px;height:316px;background:#b3b3b3;border-radius:4px;"></div>
<div class="b" style="left:1102px;top:645px;width:297px;height:83px;border:3px solid #ff1a1a;border-radius:3px;"></div>
</body></html>
